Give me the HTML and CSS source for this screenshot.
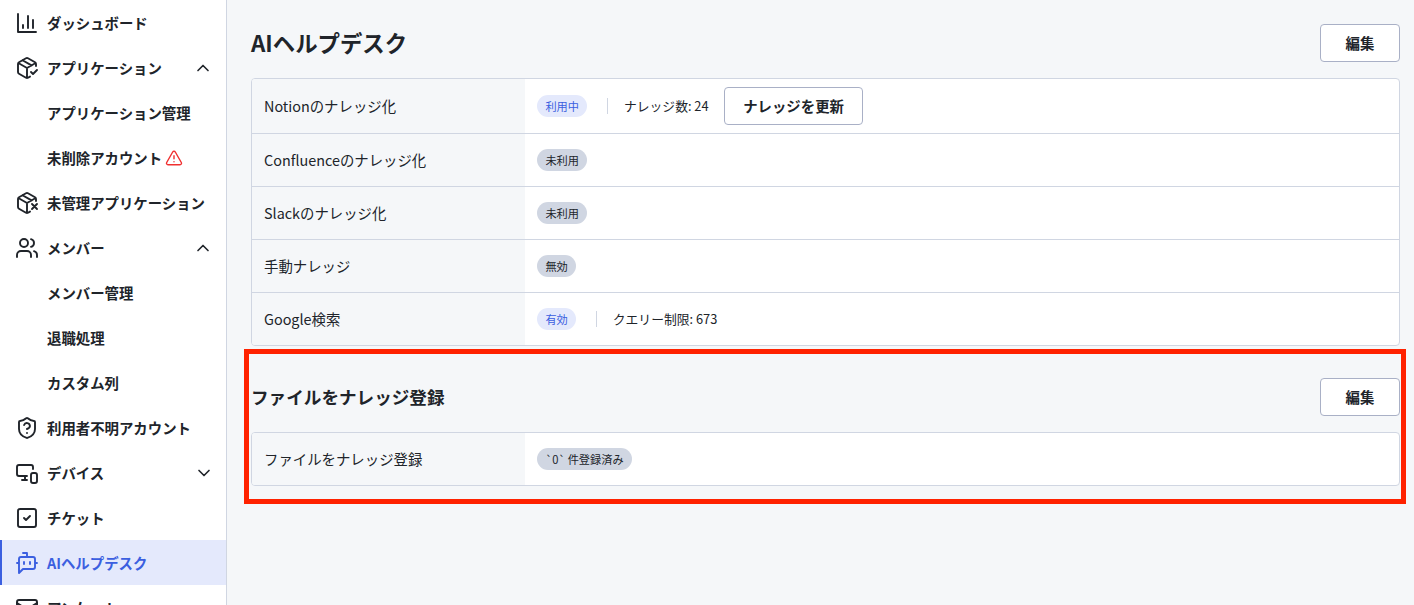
FILE: index.html
```html
<!DOCTYPE html>
<html lang="ja">

<head>
    <meta charset="UTF-8">
    <meta name="viewport" content="width=device-width, initial-scale=1.0">
    <title>AIヘルプデスク</title>
    <link rel="stylesheet" href="styles.css">
</head>

<body>
    <div class="layout">
        <nav class="sidebar">
            <a class="nav-item">
                <svg class="icon" viewBox="0 0 24 24"><path d="M3 3v18h18M8 17v-3M13 17V5M18 17V9"/></svg>
                <span>ダッシュボード</span>
            </a>
            <a class="nav-item">
                <svg class="icon" viewBox="0 0 24 24"><path d="m16 16 2 2 4-4"/><path d="M21 10V8a2 2 0 0 0-1-1.73l-7-4a2 2 0 0 0-2 0l-7 4A2 2 0 0 0 3 8v8a2 2 0 0 0 1 1.73l7 4a2 2 0 0 0 2 0l2-1.14M7.5 4.27l9 5.15M3.29 7 12 12l8.71-5M12 22V12"/></svg>
                <span>アプリケーション</span>
                <svg class="chevron" viewBox="0 0 24 24"><path d="m18 15-6-6-6 6"/></svg>
            </a>
            <a class="nav-item sub"><span>アプリケーション管理</span></a>
            <a class="nav-item sub">
                <span>未削除アカウント</span>
                <svg class="alert" viewBox="0 0 24 24"><path d="m21.73 18-8-14a2 2 0 0 0-3.48 0l-8 14A2 2 0 0 0 4 21h16a2 2 0 0 0 1.73-3M12 9v4M12 17h.01"/></svg>
            </a>
            <a class="nav-item">
                <svg class="icon" viewBox="0 0 24 24"><path d="M21 10V8a2 2 0 0 0-1-1.73l-7-4a2 2 0 0 0-2 0l-7 4A2 2 0 0 0 3 8v8a2 2 0 0 0 1 1.73l7 4a2 2 0 0 0 2 0l2-1.14M7.5 4.27l9 5.15M3.29 7 12 12l8.71-5M12 22V12M17 13l5 5M17 18l5-5"/></svg>
                <span>未管理アプリケーション</span>
            </a>
            <a class="nav-item">
                <svg class="icon" viewBox="0 0 24 24"><path d="M16 21v-2a4 4 0 0 0-4-4H6a4 4 0 0 0-4 4v2M22 21v-2a4 4 0 0 0-3-3.87M16 3.13a4 4 0 0 1 0 7.75"/><circle cx="9" cy="7" r="4"/></svg>
                <span>メンバー</span>
                <svg class="chevron" viewBox="0 0 24 24"><path d="m18 15-6-6-6 6"/></svg>
            </a>
            <a class="nav-item sub"><span>メンバー管理</span></a>
            <a class="nav-item sub"><span>退職処理</span></a>
            <a class="nav-item sub"><span>カスタム列</span></a>
            <a class="nav-item">
                <svg class="icon" viewBox="0 0 24 24"><path d="M20 13c0 5-3.5 7.5-7.66 8.95a1 1 0 0 1-.67-.01C7.5 20.5 4 18 4 13V6a1 1 0 0 1 1-1c2 0 4.5-1.2 6.24-2.72a1.17 1.17 0 0 1 1.52 0C14.51 3.81 17 5 19 5a1 1 0 0 1 1 1zM9.1 9a3 3 0 0 1 5.82 1c0 2-3 3-3 3M12 17h.01"/></svg>
                <span>利用者不明アカウント</span>
            </a>
            <a class="nav-item">
                <svg class="icon" viewBox="0 0 24 24"><path d="M18 8V6a2 2 0 0 0-2-2H4a2 2 0 0 0-2 2v7a2 2 0 0 0 2 2h8M10 19v-3.96M7 19h5"/><rect x="16" y="12" width="6" height="10" rx="2"/></svg>
                <span>デバイス</span>
                <svg class="chevron down" viewBox="0 0 24 24"><path d="m6 9 6 6 6-6"/></svg>
            </a>
            <a class="nav-item">
                <svg class="icon" viewBox="0 0 24 24"><rect x="3" y="3" width="18" height="18" rx="2"/><path d="m9 12 2 2 4-4"/></svg>
                <span>チケット</span>
            </a>
            <a class="nav-item active">
                <svg class="icon" viewBox="0 0 24 24"><path d="M12 6V2H8M8 18l-4 4V8a2 2 0 0 1 2-2h12a2 2 0 0 1 2 2v8a2 2 0 0 1-2 2ZM2 12h2M9 11v2M15 11v2M20 12h2"/></svg>
                <span>AIヘルプデスク</span>
            </a>
            <a class="nav-item">
                <svg class="icon" viewBox="0 0 24 24"><rect x="2" y="4" width="20" height="16" rx="2"/><path d="m22 7-8.97 5.7a1.94 1.94 0 0 1-2.06 0L2 7"/></svg>
                <span>アンケート</span>
            </a>
        </nav>

        <main class="content">
            <section>
                <div class="section-header">
                    <h1>AIヘルプデスク</h1>
                    <button class="btn">編集</button>
                </div>
                <dl class="table">
                    <div class="row">
                        <dt>Notionのナレッジ化</dt>
                        <dd>
                            <span class="badge on">利用中</span>
                            <span class="note"><span>ナレッジ数: 24</span></span>
                            <button class="btn">ナレッジを更新</button>
                        </dd>
                    </div>
                    <div class="row">
                        <dt>Confluenceのナレッジ化</dt>
                        <dd><span class="badge">未利用</span></dd>
                    </div>
                    <div class="row">
                        <dt>Slackのナレッジ化</dt>
                        <dd><span class="badge">未利用</span></dd>
                    </div>
                    <div class="row">
                        <dt>手動ナレッジ</dt>
                        <dd><span class="badge">無効</span></dd>
                    </div>
                    <div class="row">
                        <dt>Google検索</dt>
                        <dd>
                            <span class="badge on">有効</span>
                            <span class="note"><span>クエリー制限: 673</span></span>
                        </dd>
                    </div>
                </dl>
            </section>

            <section class="files">
                <div class="section-header">
                    <h2>ファイルをナレッジ登録</h2>
                    <button class="btn">編集</button>
                </div>
                <dl class="table">
                    <div class="row">
                        <dt>ファイルをナレッジ登録</dt>
                        <dd><span class="badge">`0` 件登録済み</span></dd>
                    </div>
                </dl>
            </section>
        </main>
    </div>
</body>

</html>
```
FILE: styles.css
```css
* {
    box-sizing: border-box;
}

body {
    margin: 0;
    font-family: "Noto Sans CJK JP", sans-serif;
    font-size: 14.4px;
    color: #20242a;
    background-color: #f5f7f9;
}

.layout {
    display: flex;
    height: 100vh;
    overflow: hidden;
}

/* Sidebar */
.sidebar {
    width: 227px;
    flex-shrink: 0;
    background-color: #fff;
    border-right: 1px solid #d0d6e2;
}

.nav-item {
    display: flex;
    align-items: center;
    height: 45px;
    padding: 1px 13px 0 15px;
    font-weight: bold;
    white-space: nowrap;
}

.nav-item span {
    padding-bottom: 2px;
}

.nav-item.sub {
    padding-left: 47px;
}

.nav-item.active {
    padding-left: 13px;
    color: #3b5fe0;
    background-color: #e4e9fc;
    border-left: 2px solid #3b5fe0;
}

svg {
    fill: none;
    stroke: currentColor;
    stroke-width: 1.9;
    stroke-linecap: round;
    stroke-linejoin: round;
    flex-shrink: 0;
}

.icon {
    width: 24px;
    height: 24px;
    margin-right: 8px;
}

.chevron {
    width: 20px;
    height: 20px;
    margin-left: auto;
    stroke-width: 2;
}

.chevron.down {
    margin-right: -1px;
}

.alert {
    width: 18px;
    height: 18px;
    margin-left: 3px;
    color: #f03030;
}

/* Content */
.content {
    flex: 1;
    padding: 24px 14px 0 24px;
}

.section-header {
    display: flex;
    justify-content: space-between;
    align-items: center;
    height: 38px;
    margin-bottom: 16px;
}

h1,
h2 {
    margin: 0;
    padding-bottom: 2px;
    font-size: 22.4px;
}

h2 {
    font-size: 17.6px;
}

.btn {
    height: 38px;
    padding: 0 18px 2px;
    min-width: 80px;
    font-family: inherit;
    font-size: 14.4px;
    font-weight: bold;
    color: inherit;
    background-color: #fff;
    border: 1px solid #a9b0c6;
    border-radius: 4px;
}

.table {
    margin: 0;
    background-color: #fff;
    border: 1px solid #d0d6e2;
    border-radius: 4px;
    overflow: hidden;
}

.row {
    display: flex;
    min-height: 52px;
}

.row + .row {
    min-height: 53px;
    border-top: 1px solid #d0d6e2;
}

dt {
    display: flex;
    align-items: center;
    width: 273px;
    padding: 0 12px 2px;
    background-color: #f5f7f9;
}

dd {
    display: flex;
    align-items: center;
    margin: 0;
    padding: 8px 12px;
}

.badge {
    height: 22px;
    padding: 0 8.4px;
    font-size: 11.2px;
    line-height: 22px;
    border-radius: 11px;
    background-color: #d0d6e2;
}

.badge.on {
    color: #3b5fe0;
    background-color: #e4e9fc;
}

.note {
    display: flex;
    align-items: center;
    margin: 0 15.6px 0 19.6px;
    font-size: 12.8px;
}

.note span {
    padding-bottom: 2px;
}

.note::before {
    content: "";
    height: 16px;
    margin-right: 16px;
    border-left: 1px solid #d0d6e2;
}

/* Highlighted block */
.files {
    margin: 3px -6px 0 -7px;
    padding: 24px 1px 13px 2px;
    border: 5px solid #ff2200;
}
```
